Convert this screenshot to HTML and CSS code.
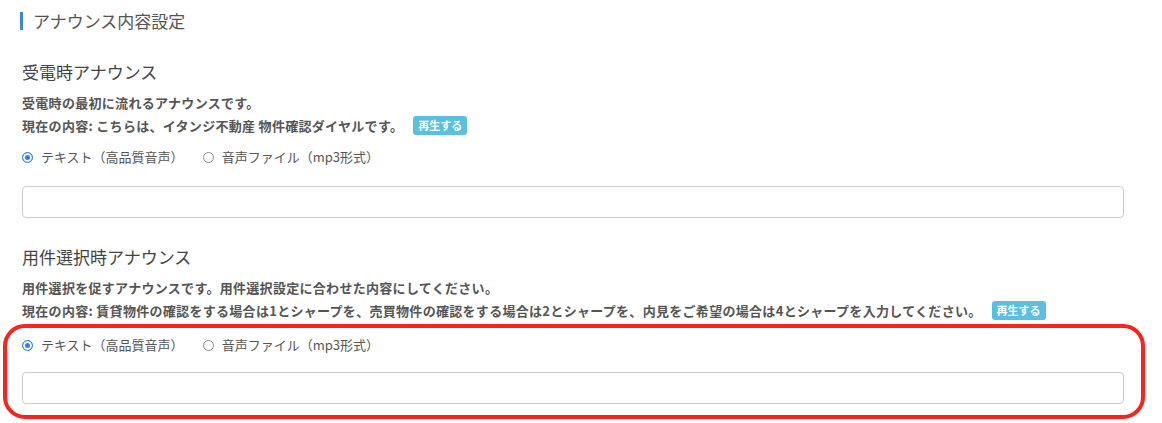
FILE: index.html
```html
<!DOCTYPE html>
<html lang="ja">
<head>
<meta charset="UTF-8" />
<title>アナウンス内容設定</title>
<link rel="stylesheet" href="styles.css">
</head>
<body>
  <div class="page">
    <h2 class="page-title">アナウンス内容設定</h2>

    <section class="announce">
      <h3 class="announce-title">受電時アナウンス</h3>
      <div class="announce-desc">
        <p>受電時の最初に流れるアナウンスです。</p>
        <p>現在の内容: こちらは、イタンジ不動産 物件確認ダイヤルです。<button type="button" class="play-btn">再生する</button></p>
      </div>
      <div class="radio-row">
        <label><input type="radio" name="answer" checked><span>テキスト（高品質音声）</span></label>
        <label><input type="radio" name="answer"><span>音声ファイル（mp3形式）</span></label>
      </div>
      <input type="text" class="text-input">
    </section>

    <section class="announce">
      <h3 class="announce-title">用件選択時アナウンス</h3>
      <div class="announce-desc">
        <p>用件選択を促すアナウンスです。用件選択設定に合わせた内容にしてください。</p>
        <p>現在の内容: 賃貸物件の確認をする場合は1とシャープを、売買物件の確認をする場合は2とシャープを、内見をご希望の場合は4とシャープを入力してください。<button type="button" class="play-btn">再生する</button></p>
      </div>
      <div class="highlight">
        <div class="radio-row">
          <label><input type="radio" name="select" checked><span>テキスト（高品質音声）</span></label>
          <label><input type="radio" name="select"><span>音声ファイル（mp3形式）</span></label>
        </div>
        <input type="text" class="text-input">
      </div>
    </section>
  </div>
</body>
</html>
```

FILE: styles.css
```css
* {
  box-sizing: border-box;
}
body {
  margin: 0;
  background: #fff;
  color: #555;
  font-family: "Noto Sans CJK JP", "Noto Sans", sans-serif;
}
.page {
  padding: 0 38px 0 22px;
}
.page-title {
  margin: 12px 0 0 -2px;
  padding-left: 10px;
  border-left: 3px solid #3a8bd3;
  font-size: 17px;
  font-weight: 400;
  line-height: 18px;
  color: #555;
}
.announce-title {
  margin: 30px 0 0;
  font-size: 17px;
  font-weight: 400;
  line-height: 24px;
  color: #444;
}
.announce + .announce .announce-title {
  margin-top: 27px;
}
.announce-desc {
  margin-top: 7px;
}
.announce-desc p {
  margin: 0;
  font-size: 13px;
  font-weight: 700;
  line-height: 23px;
  letter-spacing: 0.3px;
  color: #555;
}
.play-btn {
  display: inline-block;
  height: 19px;
  margin-left: 10px;
  padding: 0 5px;
  border: none;
  border-radius: 3px;
  background: #5bc0de;
  color: #fff;
  font-family: inherit;
  font-size: 11px;
  font-weight: 700;
  line-height: 19px;
  letter-spacing: 0;
  vertical-align: 1px;
}
.radio-row {
  display: flex;
  gap: 19px;
  margin-top: 10px;
  line-height: 20px;
  font-size: 13px;
  color: #555;
}
.radio-row label {
  display: flex;
  align-items: center;
  gap: 8px;
}
.radio-row input {
  appearance: none;
  width: 11px;
  height: 11px;
  margin: 0;
  border: 1px solid #8a8a8a;
  border-radius: 50%;
  background: #fff;
}
.radio-row input:checked {
  border-color: #2f7fe8;
  background: #2f7fe8;
  box-shadow: inset 0 0 0 2px #fff;
}
.text-input {
  display: block;
  width: 100%;
  height: 32px;
  margin-top: 19px;
  border: 1px solid #ccc;
  border-radius: 4px;
  background: #fff;
}
.highlight {
  margin: 2px -21px 0 -19px;
  padding: 7px 17px 11px 15px;
  border: 4px solid #f7261d;
  border-radius: 22px;
}
.highlight .radio-row {
  margin-top: 0;
}
.highlight .text-input {
  margin-top: 17px;
}
```
